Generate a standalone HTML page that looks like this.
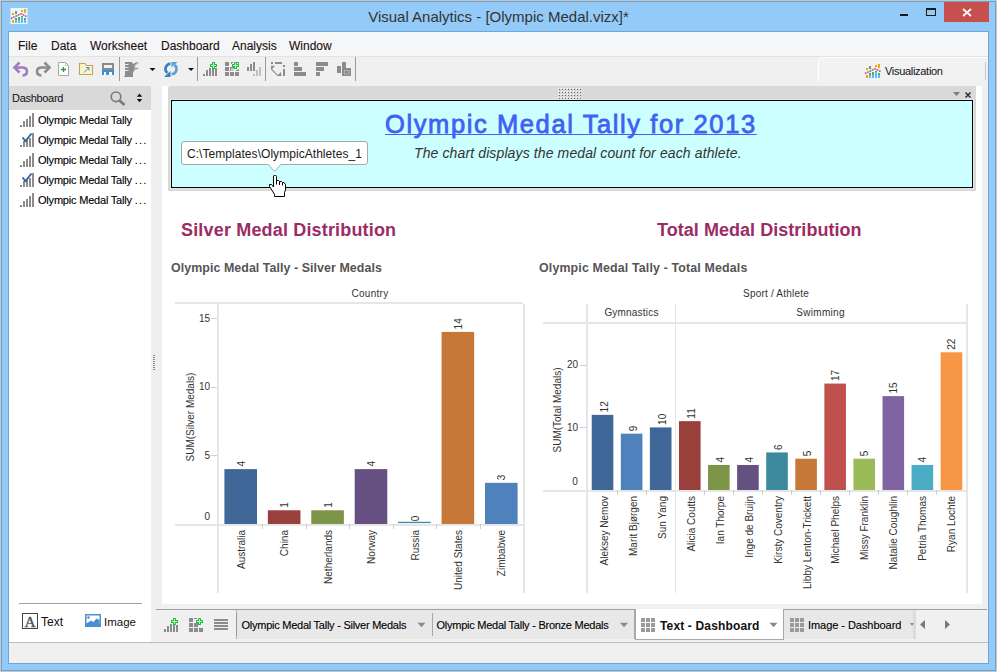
<!DOCTYPE html>
<html><head><meta charset="utf-8">
<style>
*{margin:0;padding:0;box-sizing:border-box}
html,body{width:997px;height:672px;overflow:hidden;background:#c9c9c9;font-family:"Liberation Sans",sans-serif}
.a{position:absolute}
#frame{left:0;top:0;width:997px;height:672px;background:#94caf8;border:1px solid #c8c8c8}
#frame2{left:1px;top:1px;width:995px;height:670px;border:1px solid #6d9fca}
#title{left:0;top:7px;width:997px;text-align:center;font-size:15px;color:#333;line-height:20px}
#client{left:8px;top:31px;width:981px;height:633px;border:1px solid #6aa6d8;background:#f0f0f0}
#menubar{left:9px;top:32px;width:979px;height:24px;background:#f5f6f7}
.menu{top:39px;font-size:12px;color:#1e0e0e;-webkit-text-stroke:0.1px #1e0e0e;line-height:14px}
#toolbar{left:9px;top:56px;width:979px;height:30px;background:#f0f0f0;border-top:1px solid #e3e3e3}
#lp{left:9px;top:86px;width:142px;height:556px;background:#fff}
#lphead{left:9px;top:86px;width:142px;height:24px;background:#d9d9d9}
#splitter{left:151px;top:86px;width:11px;height:523px;background:#efefef}
#dash{left:162px;top:86px;width:820px;height:518px;background:#fff}
#rstrip{left:982px;top:86px;width:6px;height:523px;background:#efefef}
#zone{left:168px;top:86px;width:808px;height:105px;background:#d9d9d9;border-radius:2px 0 0 0}
#cyan{left:171px;top:100px;width:802px;height:88px;background:#ccffff;border:1px solid #000;box-shadow:0 0 0 1px #e6e6e6}
#tabbar{left:151px;top:609px;width:837px;height:33px;background:#f0f0f0;border-top:1px solid #a0a0a0;clip-path:inset(0 1px 0 5px)}
#tabbar0{left:151px;top:609px;width:5px;height:33px;background:#f0f0f0}
#status{left:9px;top:642px;width:979px;height:21px;background:#f0f0f0;border-top:1px solid #bdbdbd}

.ttl{font-size:25.5px;color:#3f62f2;letter-spacing:1.6px;-webkit-text-stroke:0.8px #3f62f2;text-decoration:underline;text-decoration-thickness:1px;text-underline-offset:1px;text-decoration-skip-ink:none;white-space:nowrap;line-height:30px}
.sub{font-size:14px;font-style:italic;color:#333;letter-spacing:0.12px;white-space:nowrap;line-height:16px}
#tip{left:181px;top:141px;width:187px;height:24px;background:#fff;border:1px solid #a8a8a8;border-radius:3px}
.tiptext{left:187px;top:147px;font-size:12px;letter-spacing:0.05px;color:#1a1a1a;line-height:15px;white-space:nowrap}
.h2{font-size:18px;font-weight:bold;color:#9b2c64;letter-spacing:0.17px;white-space:nowrap;line-height:20px}
.h3{font-size:12.4px;font-weight:bold;color:#555;letter-spacing:0.07px;white-space:nowrap;line-height:14px}
.li{font-size:11px;letter-spacing:-0.2px;color:#000;-webkit-text-stroke:0.12px #000;white-space:nowrap;line-height:13px}
.tab{font-size:11px;letter-spacing:-0.25px;color:#000;-webkit-text-stroke:0.12px #000;white-space:nowrap;line-height:13px}
</style></head><body>
<div id="frame" class="a"></div>
<div id="frame2" class="a"></div>
<div id="title" class="a">Visual Analytics - [Olympic Medal.vizx]*</div>
<div id="client" class="a"></div>
<div id="menubar" class="a"></div>
<div class="a menu" style="left:18px">File</div>
<div class="a menu" style="left:51px">Data</div>
<div class="a menu" style="left:90px">Worksheet</div>
<div class="a menu" style="left:161px">Dashboard</div>
<div class="a menu" style="left:232px">Analysis</div>
<div class="a menu" style="left:289px">Window</div>
<div id="toolbar" class="a"></div>
<div id="lp" class="a"></div>
<div id="lphead" class="a"></div>
<div id="splitter" class="a"></div>
<div id="dash" class="a"></div>
<div id="rstrip" class="a"></div>
<div id="zone" class="a"></div>
<div id="cyan" class="a"></div>

<div id="tabbar0" class="a"></div><div id="tabbar" class="a"></div>
<div id="status" class="a"></div>
<div class="a" style="left:818px;top:57px;width:170px;height:24px;background:#f2f2f2;border:1px solid #fff;border-right:none;border-bottom:none;border-radius:5px 0 0 0"></div>
<div class="a" style="left:885px;top:65px;font-size:11px;letter-spacing:-0.3px;color:#111;line-height:13px;white-space:nowrap">Visualization</div>
<div class="a" style="left:236px;top:610px;width:197px;height:29px;background:#e8e8e8;border-left:1px solid #b4b4b4"></div>
<div class="a" style="left:432px;top:613px;width:1px;height:23px;background:#a8a8a8"></div>
<div class="a" style="left:433px;top:610px;width:202px;height:29px;background:#e8e8e8;border-right:1px solid #a8a8a8"></div>
<div class="a" style="left:635px;top:609px;width:149px;height:31px;background:#fff;border:1px solid #a8a8a8;border-top:none"></div>
<div class="a" style="left:784px;top:610px;width:129px;height:29px;background:#e8e8e8"></div>
<div class="a" style="left:913px;top:610px;width:3px;height:29px;background:#dcdcdc"></div>
<div class="a tab" style="left:241.5px;top:619px">Olympic Medal Tally - Silver Medals</div>
<div class="a tab" style="left:436.5px;top:619px">Olympic Medal Tally - Bronze Medals</div>
<div class="a" style="left:660px;top:618.5px;font-size:12px;letter-spacing:0.15px;font-weight:bold;color:#111;white-space:nowrap;line-height:14px">Text - Dashboard</div>
<div class="a tab" style="left:808px;top:619px;letter-spacing:-0.05px">Image - Dashboard</div>

<div class="a ttl" style="left:385px;top:109px">Olympic Medal Tally for 2013</div>
<div class="a sub" style="left:414px;top:145px">The chart displays the medal count for each athlete.</div>
<div id="tip" class="a"></div>
<div class="a tiptext">C:\Templates\OlympicAthletes_1</div>
<div class="a h2" style="left:181px;top:220px">Silver Medal Distribution</div>
<div class="a h2" style="left:657px;top:220px;letter-spacing:0.04px">Total Medal Distribution</div>
<div class="a h3" style="left:171px;top:261px">Olympic Medal Tally - Silver Medals</div>
<div class="a h3" style="left:539px;top:261px;letter-spacing:0.15px">Olympic Medal Tally - Total Medals</div>
<div class="a" style="left:12px;top:91.5px;font-size:11px;letter-spacing:-0.3px;color:#111;line-height:13px">Dashboard</div>
<div class="a li" style="left:38px;top:114px">Olympic Medal Tally</div>
<div class="a li" style="left:38px;top:134px">Olympic Medal Tally <span style="letter-spacing:1.2px">...</span></div>
<div class="a li" style="left:38px;top:154px">Olympic Medal Tally <span style="letter-spacing:1.2px">...</span></div>
<div class="a li" style="left:38px;top:174px">Olympic Medal Tally <span style="letter-spacing:1.2px">...</span></div>
<div class="a li" style="left:38px;top:194px">Olympic Medal Tally <span style="letter-spacing:1.2px">...</span></div>
<div class="a" style="left:19px;top:603px;width:123px;height:1px;background:#a0a0a0"></div>
<div class="a" style="left:41px;top:615px;font-size:12px;color:#111;line-height:14px">Text</div>
<div class="a" style="left:104px;top:615px;font-size:11.5px;color:#111;line-height:14px">Image</div>

<svg class="a" style="left:0;top:0" width="997" height="672" font-family="Liberation Sans, sans-serif">
<line x1="175" y1="303" x2="523" y2="303" stroke="#e6e6e6" stroke-width="2"/>
<line x1="218" y1="302" x2="218" y2="593" stroke="#e6e6e6" stroke-width="2"/>
<line x1="524" y1="304" x2="524" y2="593" stroke="#e6e6e6" stroke-width="2"/>
<line x1="175" y1="525" x2="525" y2="525" stroke="#e6e6e6" stroke-width="2"/>
<text x="370.00" y="297.00" text-anchor="middle" font-size="10" fill="#333" letter-spacing="0.3">Country</text>
<line x1="211" y1="455.5" x2="217" y2="455.5" stroke="#cfcfcf" stroke-width="1"/>
<text x="210.00" y="459.00" text-anchor="end" font-size="10" fill="#333">5</text>
<line x1="211" y1="387.5" x2="217" y2="387.5" stroke="#cfcfcf" stroke-width="1"/>
<text x="210.00" y="390.40" text-anchor="end" font-size="10" fill="#333">10</text>
<line x1="211" y1="318.5" x2="217" y2="318.5" stroke="#cfcfcf" stroke-width="1"/>
<text x="210.00" y="321.80" text-anchor="end" font-size="10" fill="#333">15</text>
<text x="210.00" y="519.60" text-anchor="end" font-size="10" fill="#333">0</text>
<text transform="translate(190.50,417.00) rotate(-90)" y="3.6" text-anchor="middle" font-size="10" fill="#333">SUM(Silver Medals)</text>
<rect x="224.41" y="469.12" width="32.60" height="54.88" fill="#3f6797"/>
<text transform="translate(241.31,466.62) rotate(-90)" y="3.6" text-anchor="start" font-size="10" fill="#333">4</text>
<text transform="translate(241.31,530.00) rotate(-90)" y="3.6" text-anchor="end" font-size="10" fill="#333">Australia</text>
<rect x="267.84" y="510.28" width="32.60" height="13.72" fill="#99403d"/>
<line x1="262.5" y1="524" x2="262.5" y2="529" stroke="#cfcfcf" stroke-width="1"/>
<text transform="translate(284.74,507.78) rotate(-90)" y="3.6" text-anchor="start" font-size="10" fill="#333">1</text>
<text transform="translate(284.74,530.00) rotate(-90)" y="3.6" text-anchor="end" font-size="10" fill="#333">China</text>
<rect x="311.27" y="510.28" width="32.60" height="13.72" fill="#7c9547"/>
<line x1="306.5" y1="524" x2="306.5" y2="529" stroke="#cfcfcf" stroke-width="1"/>
<text transform="translate(328.17,507.78) rotate(-90)" y="3.6" text-anchor="start" font-size="10" fill="#333">1</text>
<text transform="translate(328.17,530.00) rotate(-90)" y="3.6" text-anchor="end" font-size="10" fill="#333">Netherlands</text>
<rect x="354.70" y="469.12" width="32.60" height="54.88" fill="#665081"/>
<line x1="349.5" y1="524" x2="349.5" y2="529" stroke="#cfcfcf" stroke-width="1"/>
<text transform="translate(371.60,466.62) rotate(-90)" y="3.6" text-anchor="start" font-size="10" fill="#333">4</text>
<text transform="translate(371.60,530.00) rotate(-90)" y="3.6" text-anchor="end" font-size="10" fill="#333">Norway</text>
<rect x="398.13" y="521.80" width="32.60" height="1.30" fill="#3c899e"/>
<line x1="393.5" y1="524" x2="393.5" y2="529" stroke="#cfcfcf" stroke-width="1"/>
<text transform="translate(415.03,521.20) rotate(-90)" y="3.6" text-anchor="start" font-size="10" fill="#333">0</text>
<text transform="translate(415.03,530.00) rotate(-90)" y="3.6" text-anchor="end" font-size="10" fill="#333">Russia</text>
<rect x="441.56" y="331.92" width="32.60" height="192.08" fill="#c57838"/>
<line x1="436.5" y1="524" x2="436.5" y2="529" stroke="#cfcfcf" stroke-width="1"/>
<text transform="translate(458.46,329.42) rotate(-90)" y="3.6" text-anchor="start" font-size="10" fill="#333">14</text>
<text transform="translate(458.46,530.00) rotate(-90)" y="3.6" text-anchor="end" font-size="10" fill="#333">United States</text>
<rect x="484.99" y="482.84" width="32.60" height="41.16" fill="#4f81bd"/>
<line x1="480.5" y1="524" x2="480.5" y2="529" stroke="#cfcfcf" stroke-width="1"/>
<text transform="translate(501.89,480.34) rotate(-90)" y="3.6" text-anchor="start" font-size="10" fill="#333">3</text>
<text transform="translate(501.89,530.00) rotate(-90)" y="3.6" text-anchor="end" font-size="10" fill="#333">Zimbabwe</text>
<line x1="587" y1="304" x2="587" y2="593" stroke="#e6e6e6" stroke-width="2"/>
<line x1="675.5" y1="304" x2="675.5" y2="593" stroke="#e6e6e6" stroke-width="1"/>
<line x1="967" y1="304" x2="967" y2="593" stroke="#e6e6e6" stroke-width="2"/>
<line x1="543" y1="323" x2="968" y2="323" stroke="#e6e6e6" stroke-width="2"/>
<line x1="543" y1="491" x2="968" y2="491" stroke="#e6e6e6" stroke-width="2"/>
<text x="776.00" y="296.70" text-anchor="middle" font-size="10" fill="#333" letter-spacing="0.2">Sport / Athlete</text>
<text x="631.50" y="316.00" text-anchor="middle" font-size="10" fill="#333" letter-spacing="0.2">Gymnastics</text>
<text x="820.50" y="316.00" text-anchor="middle" font-size="10" fill="#333" letter-spacing="0.3">Swimming</text>
<line x1="580" y1="427.5" x2="586" y2="427.5" stroke="#cfcfcf" stroke-width="1"/>
<text x="578.00" y="431.00" text-anchor="end" font-size="10" fill="#333">10</text>
<line x1="580" y1="365.5" x2="586" y2="365.5" stroke="#cfcfcf" stroke-width="1"/>
<text x="578.00" y="368.40" text-anchor="end" font-size="10" fill="#333">20</text>
<text x="577.80" y="484.80" text-anchor="end" font-size="10" fill="#333">0</text>
<text transform="translate(557.80,410.00) rotate(-90)" y="3.6" text-anchor="middle" font-size="10" fill="#333">SUM(Total Medals)</text>
<rect x="591.74" y="414.88" width="21.60" height="75.12" fill="#3f6797"/>
<text transform="translate(604.34,412.38) rotate(-90)" y="3.6" text-anchor="start" font-size="10" fill="#333">12</text>
<text transform="translate(604.34,496.00) rotate(-90)" y="3.6" text-anchor="end" font-size="10" fill="#333">Aleksey Nemov</text>
<rect x="620.82" y="433.66" width="21.60" height="56.34" fill="#4f81bd"/>
<line x1="617.5" y1="490" x2="617.5" y2="495" stroke="#cfcfcf" stroke-width="1"/>
<text transform="translate(633.28,431.16) rotate(-90)" y="3.6" text-anchor="start" font-size="10" fill="#333">9</text>
<text transform="translate(633.28,496.00) rotate(-90)" y="3.6" text-anchor="end" font-size="10" fill="#333">Marit Bjørgen</text>
<rect x="649.89" y="427.40" width="21.60" height="62.60" fill="#3f6797"/>
<line x1="646.5" y1="490" x2="646.5" y2="495" stroke="#cfcfcf" stroke-width="1"/>
<text transform="translate(662.22,424.90) rotate(-90)" y="3.6" text-anchor="start" font-size="10" fill="#333">10</text>
<text transform="translate(662.22,496.00) rotate(-90)" y="3.6" text-anchor="end" font-size="10" fill="#333">Sun Yang</text>
<rect x="678.97" y="421.14" width="21.60" height="68.86" fill="#99403d"/>
<text transform="translate(691.16,418.64) rotate(-90)" y="3.6" text-anchor="start" font-size="10" fill="#333">11</text>
<text transform="translate(691.16,496.00) rotate(-90)" y="3.6" text-anchor="end" font-size="10" fill="#333">Alicia Coutts</text>
<rect x="708.05" y="464.96" width="21.60" height="25.04" fill="#7c9547"/>
<line x1="704.5" y1="490" x2="704.5" y2="495" stroke="#cfcfcf" stroke-width="1"/>
<text transform="translate(720.10,462.46) rotate(-90)" y="3.6" text-anchor="start" font-size="10" fill="#333">4</text>
<text transform="translate(720.10,496.00) rotate(-90)" y="3.6" text-anchor="end" font-size="10" fill="#333">Ian Thorpe</text>
<rect x="737.12" y="464.96" width="21.60" height="25.04" fill="#665081"/>
<line x1="733.5" y1="490" x2="733.5" y2="495" stroke="#cfcfcf" stroke-width="1"/>
<text transform="translate(749.04,462.46) rotate(-90)" y="3.6" text-anchor="start" font-size="10" fill="#333">4</text>
<text transform="translate(749.04,496.00) rotate(-90)" y="3.6" text-anchor="end" font-size="10" fill="#333">Inge de Bruijn</text>
<rect x="766.20" y="452.44" width="21.60" height="37.56" fill="#3c899e"/>
<line x1="762.5" y1="490" x2="762.5" y2="495" stroke="#cfcfcf" stroke-width="1"/>
<text transform="translate(777.98,449.94) rotate(-90)" y="3.6" text-anchor="start" font-size="10" fill="#333">6</text>
<text transform="translate(777.98,496.00) rotate(-90)" y="3.6" text-anchor="end" font-size="10" fill="#333">Kirsty Coventry</text>
<rect x="795.28" y="458.70" width="21.60" height="31.30" fill="#c57838"/>
<line x1="791.5" y1="490" x2="791.5" y2="495" stroke="#cfcfcf" stroke-width="1"/>
<text transform="translate(806.92,456.20) rotate(-90)" y="3.6" text-anchor="start" font-size="10" fill="#333">5</text>
<text transform="translate(806.92,496.00) rotate(-90)" y="3.6" text-anchor="end" font-size="10" fill="#333">Libby Lenton-Trickett</text>
<rect x="824.35" y="383.58" width="21.60" height="106.42" fill="#c0504d"/>
<line x1="820.5" y1="490" x2="820.5" y2="495" stroke="#cfcfcf" stroke-width="1"/>
<text transform="translate(835.86,381.08) rotate(-90)" y="3.6" text-anchor="start" font-size="10" fill="#333">17</text>
<text transform="translate(835.86,496.00) rotate(-90)" y="3.6" text-anchor="end" font-size="10" fill="#333">Michael Phelps</text>
<rect x="853.43" y="458.70" width="21.60" height="31.30" fill="#9bbb59"/>
<line x1="849.5" y1="490" x2="849.5" y2="495" stroke="#cfcfcf" stroke-width="1"/>
<text transform="translate(864.80,456.20) rotate(-90)" y="3.6" text-anchor="start" font-size="10" fill="#333">5</text>
<text transform="translate(864.80,496.00) rotate(-90)" y="3.6" text-anchor="end" font-size="10" fill="#333">Missy Franklin</text>
<rect x="882.51" y="396.10" width="21.60" height="93.90" fill="#8064a2"/>
<line x1="878.5" y1="490" x2="878.5" y2="495" stroke="#cfcfcf" stroke-width="1"/>
<text transform="translate(893.74,393.60) rotate(-90)" y="3.6" text-anchor="start" font-size="10" fill="#333">15</text>
<text transform="translate(893.74,496.00) rotate(-90)" y="3.6" text-anchor="end" font-size="10" fill="#333">Natalie Coughlin</text>
<rect x="911.58" y="464.96" width="21.60" height="25.04" fill="#4bacc6"/>
<line x1="907.5" y1="490" x2="907.5" y2="495" stroke="#cfcfcf" stroke-width="1"/>
<text transform="translate(922.68,462.46) rotate(-90)" y="3.6" text-anchor="start" font-size="10" fill="#333">4</text>
<text transform="translate(922.68,496.00) rotate(-90)" y="3.6" text-anchor="end" font-size="10" fill="#333">Petria Thomas</text>
<rect x="940.66" y="352.28" width="21.60" height="137.72" fill="#f79646"/>
<line x1="936.5" y1="490" x2="936.5" y2="495" stroke="#cfcfcf" stroke-width="1"/>
<text transform="translate(951.62,349.78) rotate(-90)" y="3.6" text-anchor="start" font-size="10" fill="#333">22</text>
<text transform="translate(951.62,496.00) rotate(-90)" y="3.6" text-anchor="end" font-size="10" fill="#333">Ryan Lochte</text>
<!-- app icon -->
<g transform="translate(11,8)"><rect x="-0.5" y="0" width="17" height="16" fill="#fff" opacity="0.85"/><rect x="1" y="12" width="2" height="3" fill="#f9a30f"/><rect x="4" y="12" width="2" height="3" fill="#5bbdf7"/><rect x="4" y="10" width="2" height="2" fill="#5ea85e"/>
<rect x="7" y="12" width="2" height="3" fill="#5bbdf7"/><rect x="7" y="9" width="2" height="3" fill="#5ea85e"/><rect x="10" y="9" width="2" height="6" fill="#5bbdf7"/><rect x="10" y="8" width="2" height="1" fill="#5ea85e"/>
<rect x="13" y="12" width="2" height="3" fill="#5bbdf7"/><rect x="13" y="10" width="2" height="2" fill="#5ea85e"/>
<rect x="1" y="5" width="2" height="2" fill="#f9a30f"/><rect x="4" y="3" width="2" height="3" fill="#5ea85e"/><rect x="10" y="2" width="2" height="2" fill="#f9a30f"/><rect x="13" y="1" width="2" height="4" fill="#f9a30f"/>
<path d="M0 10.5 L10 5.8 L16 8.7" stroke="#f4a8a0" stroke-width="1.4" fill="none"/>
<path d="M0 10.5 L10 5.8 L16 8.7" stroke="#8a64b4" stroke-width="1.4" fill="none" stroke-dasharray="1.3 1.3"/></g>
<!-- window controls -->
<rect x="900" y="14" width="8" height="2" fill="#1a1a1a"/>
<rect x="926.5" y="8.5" width="9" height="7" fill="none" stroke="#1a1a1a" stroke-width="1"/><rect x="926" y="8" width="10" height="2" fill="#1a1a1a"/>
<rect x="944" y="2" width="45" height="20" fill="#c74f4e"/>
<path d="M963 9 L971 16 M971 9 L963 16" stroke="#fff" stroke-width="1.7"/>
<!-- toolbar: undo -->
<path d="M19.5 62.5 L14.5 67.5 L19.5 72.5" stroke="#a27cc2" stroke-width="2.6" fill="none" stroke-linejoin="miter"/>
<path d="M15.5 67.5 L22 67.5 Q27 67.5 27 71.5 Q27 75 22.5 75.5" stroke="#a27cc2" stroke-width="2.6" fill="none"/>
<!-- redo -->
<path d="M44.5 62.5 L49.5 67.5 L44.5 72.5" stroke="#8c8c8c" stroke-width="2.6" fill="none"/>
<path d="M48.5 67.5 L42 67.5 Q37 67.5 37 71.5 Q37 75 41.5 75.5" stroke="#8c8c8c" stroke-width="2.6" fill="none"/>
<!-- new sheet -->
<path d="M58.5 62.5 L65.5 62.5 L68.5 65.5 L68.5 75.5 L58.5 75.5 Z" fill="#fff" stroke="#a8a8a8" stroke-width="1"/>
<path d="M65.5 62.5 L65.5 65.5 L68.5 65.5" fill="none" stroke="#c8c8c8" stroke-width="1"/>
<path d="M61 69.5 L66 69.5 M63.5 67 L63.5 72" stroke="#2a9a3a" stroke-width="1.3"/>
<!-- folder -->
<path d="M79.5 63.5 L85 63.5 L86.5 65.5 L92.5 65.5 L92.5 74.5 L79.5 74.5 Z" fill="#fdf4c8" stroke="#c8a064" stroke-width="1.1"/>
<path d="M84 72.5 L88.5 68 M86 67.5 L89 67.5 L89 70.5" stroke="#3a8ed0" stroke-width="1" fill="none"/>
<!-- save -->
<rect x="102" y="63" width="12" height="12" fill="#8a8a8a"/><rect x="104" y="65" width="8" height="3" fill="#f0f0f0"/><rect x="102" y="70" width="12" height="5" fill="#3d8fd0"/><rect x="104" y="72" width="8" height="3" fill="#fff"/><rect x="106" y="72" width="3" height="3" fill="#3d8fd0"/>
<!-- separators -->
<rect x="119" y="57" width="1" height="24" fill="#9a9a9a"/>
<rect x="197" y="57" width="1" height="24" fill="#9a9a9a"/>
<rect x="265" y="57" width="1" height="24" fill="#9a9a9a"/>
<rect x="355" y="57" width="1" height="24" fill="#9a9a9a"/>
<!-- highlighter -->
<path d="M125 62 L132 62 L133 64 L137 62 L139 63 L134 67 L139 68 L134 70.5 L133 73 L133 77 L124 77 L125 75 Z" fill="#8c8c8c"/>
<path d="M125 64.5 L128.5 64.5 M125 67.5 L128.5 67.5 M125 70.5 L128.5 70.5" stroke="#e8e8e8" stroke-width="1"/>
<path d="M134.5 66 L139 62 M134.5 69 L139.5 65" stroke="#f0f0f0" stroke-width="0.9"/>
<path d="M149.5 68 L155.5 68 L152.5 71 Z" fill="#111"/>
<!-- refresh -->
<path d="M170.5 63.7 A5.3 5.3 0 0 0 167.3 73" stroke="#3d80b8" stroke-width="2.6" fill="none"/>
<path d="M164 77 L170.5 71 L170.5 77 Z" fill="#3d80b8"/>
<path d="M171.5 74.3 A5.3 5.3 0 0 0 174.7 65" stroke="#5b9fd3" stroke-width="2.6" fill="none"/>
<path d="M177.5 62 L171.5 62 L171.5 67.5 Z" fill="#5b9fd3"/>
<path d="M188 68 L194 68 L191 71 Z" fill="#111"/>
<!-- bars plus -->
<g fill="#8c8c8c"><rect x="203" y="74" width="2" height="2"/><rect x="206" y="70" width="2" height="6"/><rect x="209" y="68" width="2" height="8"/><rect x="212" y="68" width="2" height="8"/><rect x="215" y="68" width="2" height="8"/></g>
<g><rect x="212" y="62" width="3" height="7" fill="#22c23e"/><rect x="210" y="64" width="7" height="3" fill="#22c23e"/><rect x="213" y="63" width="1" height="5" fill="#b6f5bd"/><rect x="211" y="65" width="5" height="1" fill="#b6f5bd"/></g>
<!-- grid plus -->
<g fill="#8c8c8c"><rect x="225" y="62" width="4" height="4"/><rect x="225" y="67" width="4" height="4"/><rect x="230" y="67" width="4" height="4"/><rect x="225" y="72" width="4" height="4"/><rect x="230" y="72" width="4" height="4"/><rect x="235" y="72" width="4" height="4"/>
<rect x="231" y="62" width="2" height="1"/><rect x="231" y="62" width="1" height="2"/><rect x="237" y="62" width="2" height="1"/><rect x="238" y="62" width="1" height="2"/><rect x="238" y="69" width="1" height="2"/><rect x="236" y="70" width="3" height="1"/></g>
<rect x="231" y="68" width="3" height="3" fill="#c8c8c8"/>
<g><rect x="234" y="62" width="3" height="7" fill="#22c23e"/><rect x="232" y="64" width="7" height="3" fill="#22c23e"/><rect x="235" y="63" width="1" height="5" fill="#b6f5bd"/><rect x="233" y="65" width="5" height="1" fill="#b6f5bd"/></g>
<!-- faded bars -->
<g fill="#8c8c8c"><rect x="247" y="67" width="2" height="4"/><rect x="250" y="64" width="2" height="7"/><rect x="253" y="62" width="2" height="9"/></g>
<g fill="#c0c0c0"><rect x="253" y="74" width="2" height="2"/><rect x="256" y="70" width="2" height="6"/><rect x="259" y="67" width="2" height="9"/></g>
<!-- swap -->
<g fill="#8c8c8c"><rect x="271" y="62" width="2" height="2"/><rect x="275" y="62" width="7" height="2"/><rect x="283" y="65" width="2" height="2"/><rect x="283" y="69" width="2" height="7"/></g>
<path d="M271.7 67 L271.7 69.5 L277.5 75.3 L279 75.3" stroke="#8c8c8c" stroke-width="1.1" fill="none"/>
<path d="M271 65.5 L275 66 L271.5 69.5 Z" fill="#8c8c8c"/><path d="M281.5 76 L277 76 L281 72 Z" fill="#8c8c8c"/>
<!-- sort asc -->
<g fill="#8c8c8c"><rect x="294" y="62" width="4" height="4"/><rect x="294" y="67" width="8" height="4"/><rect x="294" y="72" width="12" height="4"/></g>
<!-- sort desc -->
<g fill="#8c8c8c"><rect x="316" y="62" width="12" height="4"/><rect x="316" y="67" width="8" height="4"/><rect x="316" y="72" width="4" height="4"/></g>
<!-- fit -->
<g fill="#8c8c8c"><rect x="337" y="66" width="4" height="7"/><rect x="342" y="62" width="4" height="14"/><rect x="342" y="68" width="9" height="8"/></g>
<rect x="344.5" y="70.5" width="4.5" height="3.5" fill="none" stroke="#b4b4b4" stroke-width="0.8"/>
<!-- visualization tab -->

<rect x="985" y="62" width="1" height="18" fill="#c8c8c8"/>
<g transform="translate(865,63)"><rect x="1" y="12" width="2" height="3" fill="#f9a30f"/><rect x="4" y="12" width="2" height="3" fill="#5bbdf7"/><rect x="4" y="10" width="2" height="2" fill="#5ea85e"/>
<rect x="7" y="12" width="2" height="3" fill="#5bbdf7"/><rect x="7" y="9" width="2" height="3" fill="#5ea85e"/><rect x="10" y="9" width="2" height="6" fill="#5bbdf7"/><rect x="10" y="8" width="2" height="1" fill="#5ea85e"/>
<rect x="13" y="12" width="2" height="3" fill="#5bbdf7"/><rect x="13" y="10" width="2" height="2" fill="#5ea85e"/>
<rect x="1" y="5" width="2" height="2" fill="#f9a30f"/><rect x="4" y="3" width="2" height="3" fill="#5ea85e"/><rect x="10" y="2" width="2" height="2" fill="#f9a30f"/><rect x="13" y="1" width="2" height="4" fill="#f9a30f"/>
<path d="M0 10.5 L10 5.8 L16 8.7" stroke="#f4a8a0" stroke-width="1.4" fill="none"/>
<path d="M0 10.5 L10 5.8 L16 8.7" stroke="#8a64b4" stroke-width="1.4" fill="none" stroke-dasharray="1.3 1.3"/></g>
<!-- left panel header icons -->
<circle cx="116" cy="96.8" r="4.8" fill="none" stroke="#7a7a7a" stroke-width="1.6"/>
<path d="M119.5 100.5 L124.5 105" stroke="#7a7a7a" stroke-width="2.6"/>
<path d="M136.8 96.8 L139.5 93.6 L142.2 96.8 Z M136.8 99.1 L139.5 102.2 L142.2 99.1 Z" fill="#111"/>
<!-- list icons -->
<g id="bi" fill="#8c8c8c"><rect x="20" y="125" width="2" height="2"/><rect x="23" y="121" width="2" height="6"/><rect x="26" y="119" width="2" height="8"/><rect x="29" y="116" width="2" height="11"/><rect x="32" y="113" width="2" height="14"/></g>
<use href="#bi" y="20"/><use href="#bi" y="40"/><use href="#bi" y="60"/><use href="#bi" y="80"/>
<rect x="21" y="134" width="10" height="8" fill="#fff"/><rect x="21" y="174" width="10" height="8" fill="#fff"/>
<g fill="#8c8c8c"><rect x="23" y="141" width="2" height="6"/><rect x="26" y="140" width="2" height="7"/><rect x="29" y="138" width="2" height="9"/></g>
<g fill="#8c8c8c"><rect x="23" y="181" width="2" height="6"/><rect x="26" y="180" width="2" height="7"/><rect x="29" y="178" width="2" height="9"/></g>
<path d="M22.5 137.5 L25.5 141 L31.5 133.5" stroke="#2d5f9e" stroke-width="1.8" fill="none"/>
<path d="M22.5 177.5 L25.5 181 L31.5 173.5" stroke="#2d5f9e" stroke-width="1.8" fill="none"/>
<!-- splitter grip -->
<g fill="#8a8a8a"><rect x="153" y="355" width="2" height="1"/><rect x="153" y="357" width="2" height="1"/><rect x="153" y="359" width="2" height="1"/><rect x="153" y="361" width="2" height="1"/><rect x="153" y="363" width="2" height="1"/><rect x="153" y="365" width="2" height="1"/><rect x="153" y="367" width="2" height="1"/><rect x="153" y="369" width="2" height="1"/></g>
<!-- zone header grip -->
<g><rect x="558" y="88" width="1" height="1" fill="#fff"/><rect x="559" y="89" width="1" height="1" fill="#6a6a6a"/><rect x="561" y="88" width="1" height="1" fill="#fff"/><rect x="562" y="89" width="1" height="1" fill="#6a6a6a"/><rect x="564" y="88" width="1" height="1" fill="#fff"/><rect x="565" y="89" width="1" height="1" fill="#6a6a6a"/><rect x="567" y="88" width="1" height="1" fill="#fff"/><rect x="568" y="89" width="1" height="1" fill="#6a6a6a"/><rect x="570" y="88" width="1" height="1" fill="#fff"/><rect x="571" y="89" width="1" height="1" fill="#6a6a6a"/><rect x="573" y="88" width="1" height="1" fill="#fff"/><rect x="574" y="89" width="1" height="1" fill="#6a6a6a"/><rect x="576" y="88" width="1" height="1" fill="#fff"/><rect x="577" y="89" width="1" height="1" fill="#6a6a6a"/><rect x="579" y="88" width="1" height="1" fill="#fff"/><rect x="580" y="89" width="1" height="1" fill="#6a6a6a"/><rect x="558" y="91" width="1" height="1" fill="#fff"/><rect x="559" y="92" width="1" height="1" fill="#6a6a6a"/><rect x="561" y="91" width="1" height="1" fill="#fff"/><rect x="562" y="92" width="1" height="1" fill="#6a6a6a"/><rect x="564" y="91" width="1" height="1" fill="#fff"/><rect x="565" y="92" width="1" height="1" fill="#6a6a6a"/><rect x="567" y="91" width="1" height="1" fill="#fff"/><rect x="568" y="92" width="1" height="1" fill="#6a6a6a"/><rect x="570" y="91" width="1" height="1" fill="#fff"/><rect x="571" y="92" width="1" height="1" fill="#6a6a6a"/><rect x="573" y="91" width="1" height="1" fill="#fff"/><rect x="574" y="92" width="1" height="1" fill="#6a6a6a"/><rect x="576" y="91" width="1" height="1" fill="#fff"/><rect x="577" y="92" width="1" height="1" fill="#6a6a6a"/><rect x="579" y="91" width="1" height="1" fill="#fff"/><rect x="580" y="92" width="1" height="1" fill="#6a6a6a"/><rect x="558" y="94" width="1" height="1" fill="#fff"/><rect x="559" y="95" width="1" height="1" fill="#6a6a6a"/><rect x="561" y="94" width="1" height="1" fill="#fff"/><rect x="562" y="95" width="1" height="1" fill="#6a6a6a"/><rect x="564" y="94" width="1" height="1" fill="#fff"/><rect x="565" y="95" width="1" height="1" fill="#6a6a6a"/><rect x="567" y="94" width="1" height="1" fill="#fff"/><rect x="568" y="95" width="1" height="1" fill="#6a6a6a"/><rect x="570" y="94" width="1" height="1" fill="#fff"/><rect x="571" y="95" width="1" height="1" fill="#6a6a6a"/><rect x="573" y="94" width="1" height="1" fill="#fff"/><rect x="574" y="95" width="1" height="1" fill="#6a6a6a"/><rect x="576" y="94" width="1" height="1" fill="#fff"/><rect x="577" y="95" width="1" height="1" fill="#6a6a6a"/><rect x="579" y="94" width="1" height="1" fill="#fff"/><rect x="580" y="95" width="1" height="1" fill="#6a6a6a"/><rect x="558" y="97" width="1" height="1" fill="#fff"/><rect x="559" y="98" width="1" height="1" fill="#6a6a6a"/><rect x="561" y="97" width="1" height="1" fill="#fff"/><rect x="562" y="98" width="1" height="1" fill="#6a6a6a"/><rect x="564" y="97" width="1" height="1" fill="#fff"/><rect x="565" y="98" width="1" height="1" fill="#6a6a6a"/><rect x="567" y="97" width="1" height="1" fill="#fff"/><rect x="568" y="98" width="1" height="1" fill="#6a6a6a"/><rect x="570" y="97" width="1" height="1" fill="#fff"/><rect x="571" y="98" width="1" height="1" fill="#6a6a6a"/><rect x="573" y="97" width="1" height="1" fill="#fff"/><rect x="574" y="98" width="1" height="1" fill="#6a6a6a"/><rect x="576" y="97" width="1" height="1" fill="#fff"/><rect x="577" y="98" width="1" height="1" fill="#6a6a6a"/><rect x="579" y="97" width="1" height="1" fill="#fff"/><rect x="580" y="98" width="1" height="1" fill="#6a6a6a"/></g>
<!-- zone controls -->
<path d="M953 92 L960 92 L956.5 96 Z" fill="#7a7a7a"/>
<path d="M965.5 92.5 L970.5 97.5 M970.5 92.5 L965.5 97.5" stroke="#333" stroke-width="1.6"/>
<!-- text/image icons -->
<rect x="22.5" y="613.5" width="15" height="15" fill="#fff" stroke="#444" stroke-width="1"/>
<text x="30" y="627" text-anchor="middle" font-family="Liberation Serif" font-size="15.5" fill="#505050" stroke="#505050" stroke-width="0.35">A</text>
<rect x="85" y="614" width="16" height="13" fill="#4a8fd0"/><rect x="86.5" y="615.5" width="13" height="8" fill="#fff"/>
<circle cx="88.5" cy="617.5" r="1.3" fill="#4a8fd0"/>
<path d="M86.5 623.5 L91 620.5 L93.5 622 L96.5 618.5 L99.5 620 L99.5 625 L86.5 625 Z" fill="#4a8fd0"/>
<!-- tabbar icons -->
<g fill="#8c8c8c"><rect x="164" y="629" width="2" height="3"/><rect x="167" y="626" width="2" height="6"/><rect x="170" y="624" width="2" height="8"/><rect x="173" y="624" width="2" height="8"/><rect x="176" y="625" width="2" height="7"/></g>
<g><rect x="173" y="618" width="3" height="7" fill="#22c23e"/><rect x="171" y="620" width="7" height="3" fill="#22c23e"/><rect x="174" y="619" width="1" height="5" fill="#b6f5bd"/><rect x="172" y="621" width="5" height="1" fill="#b6f5bd"/></g>
<g fill="#8c8c8c"><rect x="189" y="618" width="4" height="4"/><rect x="189" y="623" width="4" height="4"/><rect x="194" y="623" width="4" height="4"/><rect x="189" y="628" width="4" height="4"/><rect x="194" y="628" width="4" height="4"/><rect x="199" y="628" width="4" height="4"/><rect x="194" y="618" width="3" height="1"/></g>
<g><rect x="198" y="618" width="3" height="7" fill="#22c23e"/><rect x="196" y="620" width="7" height="3" fill="#22c23e"/><rect x="199" y="619" width="1" height="5" fill="#b6f5bd"/><rect x="197" y="621" width="5" height="1" fill="#b6f5bd"/></g>
<g fill="#8c8c8c"><rect x="214" y="619" width="14" height="2"/><rect x="214" y="622" width="14" height="2"/><rect x="214" y="625" width="14" height="2"/><rect x="214" y="628" width="14" height="2"/></g>
<!-- tab dropdowns / nav -->
<path d="M417.5 622.8 L425.5 622.8 L421.5 627.3 Z" fill="#8a8a8a"/>
<path d="M620 622.8 L628 622.8 L624 627.3 Z" fill="#8a8a8a"/>
<path d="M769.5 622.8 L777.5 622.8 L773.5 627.3 Z" fill="#8a8a8a"/>
<path d="M910 623 L914 623 L912 626 Z" fill="#8a8a8a"/>
<path d="M925 620 L925 629 L920 624.5 Z" fill="#7a7a7a"/>
<path d="M945 620 L945 629 L950 624.5 Z" fill="#7a7a7a"/>
<!-- tab grid icons -->
<g id="tg" fill="#9a9a9a"><rect x="641" y="618" width="4" height="4"/><rect x="646" y="618" width="4" height="4"/><rect x="651" y="618" width="4" height="4"/><rect x="641" y="623" width="4" height="4"/><rect x="646" y="623" width="4" height="4"/><rect x="651" y="623" width="4" height="4"/><rect x="641" y="628" width="4" height="4"/><rect x="646" y="628" width="4" height="4"/><rect x="651" y="628" width="4" height="4"/></g>
<use href="#tg" x="149"/>
<rect x="236" y="613" width="1" height="23" fill="#9a9a9a"/>
<!-- tooltip pointer -->
<path d="M268 164.3 L274.5 171.5 L281 164.3" fill="#fff" stroke="#a8a8a8" stroke-width="1"/>
<rect x="268.5" y="163" width="12" height="1.6" fill="#fff"/>
<!-- hand cursor -->
<path d="M273.5 176 Q273.5 175.5 274.5 175.5 L275.5 175.5 Q276.5 175.5 276.5 176.5 L276.5 180.5 L278.5 180.5 L279.5 181.5 L281.5 181.5 L282.5 182.5 L284 182.5 L285.5 184.5 L285.5 190 L284.5 192.5 L284.5 196.5 L274.5 196.5 L274.5 194.5 L272.5 191 L269.5 186.5 L269.5 184.5 L271.5 184.5 L273.5 187 Z" fill="#fff" stroke="#000" stroke-width="1"/>
<path d="M276.5 180.5 L276.5 184.5 M279.5 181.5 L279.5 185 M282.5 182.5 L282.5 185.5" stroke="#000" stroke-width="1"/>

</svg>
</body></html>
